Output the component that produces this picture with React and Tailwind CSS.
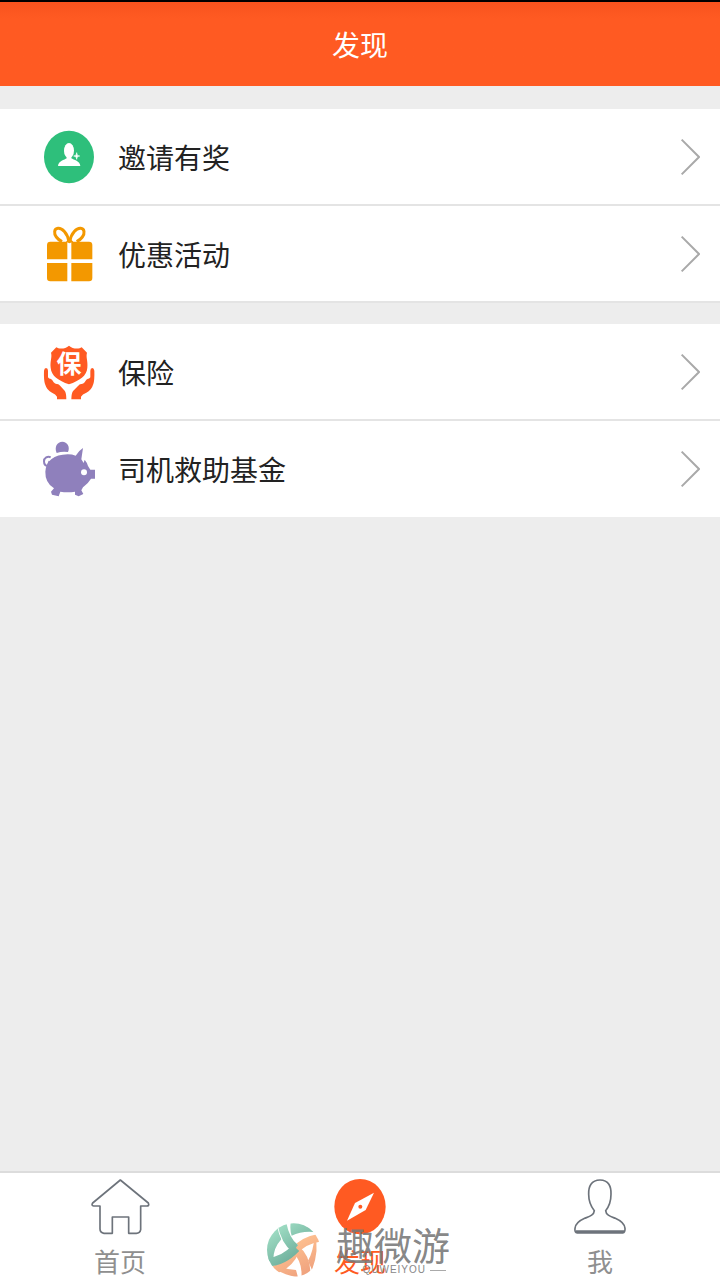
const FONT = "font-['Noto_Sans_CJK_SC',sans-serif]"

function InviteIcon() {
  return (
    <svg className="size-[60px] shrink-0" viewBox="30 20 180 180" aria-hidden="true">
      <ellipse cx="117" cy="110" rx="75" ry="79" fill="#2ebf7b" />
      <g fill="#fff">
        <ellipse cx="117" cy="91" rx="15" ry="23" />
        <path d="M110 106h14v8c7 5 26 8 27 23H84c1-15 20-18 26-23z" />
        <path d="M140 97c1 7 2 9 9 10-7 1-8 3-9 10-1-7-2-9-9-10 7-1 8-3 9-10z" stroke="#fff" strokeWidth="2" />
      </g>
    </svg>
  )
}

function GiftIcon() {
  return (
    <svg className="size-[60px] shrink-0" viewBox="30 26 180 180" aria-hidden="true">
      <g fill="#f39800">
        <path d="M61 79H112V132H51V89q0-10 10-10z" />
        <path d="M124 79H177q10 0 10 10V132H124z" />
        <path d="M51 143H112V198H61q-10 0-10-10z" />
        <path d="M124 143H187V188q0 10-10 10H124z" />
        <path d="M108 79L118 68L130 79L118 84z" />
      </g>
      <g fill="none" stroke="#f39800" strokeWidth="9">
        <path d="M117 79C112 52 96 38 84 39C72 40 71 54 79 65C84 72 90 76 96 79" />
        <path d="M119 79C124 52 140 38 152 39C164 40 165 54 157 65C152 72 146 76 140 79" />
      </g>
    </svg>
  )
}

function InsuranceIcon() {
  return (
    <svg className="size-[60px] shrink-0" viewBox="30 17 180 180" aria-hidden="true">
      <g fill="#ff5a22">
        <path d="M117 28C126 36 137 38 149 36L155 33L171 49C167 63 174 72 172 94C170 119 149 132 117 144C85 132 64 119 62 94C60 72 67 63 63 49L79 33L85 36C97 38 108 36 117 28z" />
        <path d="M42 103Q43 95 48 95Q54 95 54 103V123Q57 128 61 127Q66 128 71 138Q75 143 80 143Q86 142 91 149L104 163Q109 169 109 189H81V181Q77 173 66 169Q51 163 45 143Q41 130 42 103z" />
        <path d="M193 103Q192 95 187 95Q181 95 181 103V123Q178 128 174 127Q169 128 164 138Q160 143 155 143Q149 142 144 149L130 163Q124 169 124 189H153V181Q157 173 169 169Q184 163 190 143Q194 130 193 103z" />
      </g>
      <text x="117" y="111" textAnchor="middle" fontSize="75" fontWeight="700" fill="#fff">保</text>
    </svg>
  )
}

function PiggyIcon() {
  return (
    <svg className="size-[60px] shrink-0" viewBox="30 26 180 180" aria-hidden="true">
      <g fill="#8f80bc">
        <path d="M80 68C72 49 82 34 97 34C112 34 121 50 114 65Q97 62 80 68z" />
        <path d="M113 72Q127 72 137 76Q145 62 159 53L154 87L161 98L164 88Q171 96 174 107L181 118H195V145H183Q174 160 159 171L154 180L160 191L146 198L135 193V184Q113 188 91 184L86 198L66 193L63 184L72 174Q45 157 46 124Q50 74 113 72z" />
      </g>
      <path d="M62 81C53 76 42 83 42 93C42 102 47 107 54 108" fill="none" stroke="#8f80bc" strokeWidth="6" />
      <path d="M58 92L53 106" stroke="#8f80bc" strokeWidth="5" />
      <circle cx="162" cy="126" r="9" fill="#fff" />
    </svg>
  )
}

function HomeIcon() {
  return (
    <svg className="h-[58px] w-[60px]" viewBox="30 36 180 174" fill="none" stroke="#6d737b" strokeWidth="5" strokeLinejoin="round" aria-hidden="true">
      <path d="M121 45L205 114Q209 123 200 123H182V194Q180 205 169 205H146V156H97V205H72Q60 203 60 192V123H41Q33 122 38 114z" />
    </svg>
  )
}

function CompassIcon() {
  return (
    <svg className="h-[58px] w-[60px]" viewBox="210 36 180 174" aria-hidden="true">
      <ellipse cx="300" cy="125" rx="77" ry="83" fill="#ff5a22" />
      <path d="M342 83L317 135L261 167L285 114z" fill="#fff" />
      <circle cx="301" cy="125" r="6" fill="#ff5a22" />
    </svg>
  )
}

function PersonIcon() {
  return (
    <svg className="h-[58px] w-[60px]" viewBox="30 36 180 174" fill="none" stroke="#6d737b" strokeWidth="5" strokeLinejoin="round" aria-hidden="true">
      <path d="M120 45C146 45 154 64 153 88C153 112 147 125 137 137C138 150 151 154 166 160C184 168 194 177 195 190Q196 202 188 204H52Q43 202 45 190C46 177 56 168 74 160C89 154 102 150 103 137C93 125 86 112 86 88C85 64 94 45 120 45z" />
      <path d="M48 200H192" strokeWidth="8" />
    </svg>
  )
}

function Row({ icon, label, divider }) {
  return (
    <li>
      <button
        type="button"
        className={`flex w-full items-center gap-[18px] bg-white pl-10 pr-5 text-left ${divider ? 'h-[97px] border-b-2 border-[#e4e4e4]' : 'h-24'}`}
      >
        {icon}
        <span className="flex-1 text-[28px] leading-10 text-[#222]">{label}</span>
        <svg className="h-[38px] w-5 shrink-0" viewBox="60 142 60 114" fill="none" stroke="#a9a9a9" strokeWidth="6" aria-hidden="true">
          <path d="M65 147L117 199L65 251" />
        </svg>
      </button>
    </li>
  )
}

function Tab({ icon, label, active }) {
  return (
    <button type="button" className="flex flex-1 flex-col items-center gap-2 pt-1 pb-px" aria-current={active ? 'page' : undefined}>
      {icon}
      <span className={`text-[26px] leading-9 ${active ? 'text-[#ff5a22]' : 'text-[#8f8f8f]'}`}>{label}</span>
    </button>
  )
}

function WatermarkLogo() {
  return (
    <svg className="size-[56px] shrink-0" viewBox="20 172 168 168" aria-hidden="true">
      <defs>
        <linearGradient id="mint" gradientUnits="userSpaceOnUse" x1="30" y1="190" x2="110" y2="300">
          <stop offset="0" stopColor="#a4e2c8" />
          <stop offset="1" stopColor="#68a896" />
        </linearGradient>
        <linearGradient id="peach" gradientUnits="userSpaceOnUse" x1="100" y1="220" x2="160" y2="330">
          <stop offset="0" stopColor="#ffc392" />
          <stop offset="1" stopColor="#ee9f7c" />
        </linearGradient>
        <clipPath id="disc">
          <circle cx="103" cy="256" r="80" />
        </clipPath>
      </defs>
      <circle cx="103" cy="256" r="80" fill="#fff" />
      <g clipPath="url(#disc)" fill="none">
        <g stroke="#fff" strokeWidth="31">
          <path d="M180 205Q173 262 146 320" />
          <path d="M35 318Q92 303 108 254Q130 226 180 220" />
          <path d="M108 254Q144 282 141 335" />
        </g>
        <path d="M166 212Q181 256 158 316L146 288Q162 262 166 212z" fill="url(#peach)" />
        <path d="M40 308Q70 330 116 338L110 316Q88 316 66 306z" fill="url(#peach)" />
        <path d="M108 254Q142 280 140 335" stroke="url(#peach)" strokeWidth="27" />
        <path d="M36 318Q88 306 108 258Q130 228 182 219" stroke="url(#peach)" strokeWidth="24" />
        <path d="M94 174H124L172 203Q130 197 97 213Q91 196 94 174z" fill="url(#mint)" />
        <path d="M57 180L22 222V292L42 285Q42 250 66 224z" fill="url(#mint)" />
        <path d="M68 180Q78 229 106 252" stroke="#fff" strokeWidth="31" />
        <path d="M68 178Q78 229 108 252" stroke="url(#mint)" strokeWidth="27" />
        <path d="M22 291Q68 294 110 250" stroke="url(#mint)" strokeWidth="27" />
      </g>
    </svg>
  )
}

function Watermark() {
  return (
    <div className="pointer-events-none absolute bottom-0.5 left-1/2 flex -translate-x-[94px] items-start gap-3.5">
      <WatermarkLogo />
      <div className="flex flex-col pt-0.5">
        <span className="text-[38px] leading-10 whitespace-nowrap text-[#777]/90">趣微游</span>
        <span className="flex items-center justify-end gap-1 pr-1 font-['Liberation_Sans',sans-serif] text-[10px] leading-3 tracking-widest text-[#888]">
          QUWEIYOU
          <span className="h-px w-4 bg-[#aaa]" />
        </span>
      </div>
    </div>
  )
}

export default function App() {
  return (
    <div className={`flex min-h-screen flex-col bg-[#ededed] ${FONT}`}>
      <header className="flex h-[86px] items-center justify-center border-t-2 border-black bg-linear-to-b from-[#f8531e] to-[#ff5a22] to-20%">
        <h1 className="text-[28px] leading-10 text-white">发现</h1>
      </header>

      <main className="flex flex-1 flex-col gap-[21px] pt-[23px]">
        <ul>
          <Row icon={<InviteIcon />} label="邀请有奖" divider />
          <Row icon={<GiftIcon />} label="优惠活动" divider />
        </ul>
        <ul>
          <Row icon={<InsuranceIcon />} label="保险" divider />
          <Row icon={<PiggyIcon />} label="司机救助基金" />
        </ul>
      </main>

      <nav className="relative flex border-t-2 border-[#dcdcdc] bg-white">
        <Tab icon={<HomeIcon />} label="首页" />
        <Tab icon={<CompassIcon />} label="发现" active />
        <Tab icon={<PersonIcon />} label="我" />
        <Watermark />
      </nav>
    </div>
  )
}
